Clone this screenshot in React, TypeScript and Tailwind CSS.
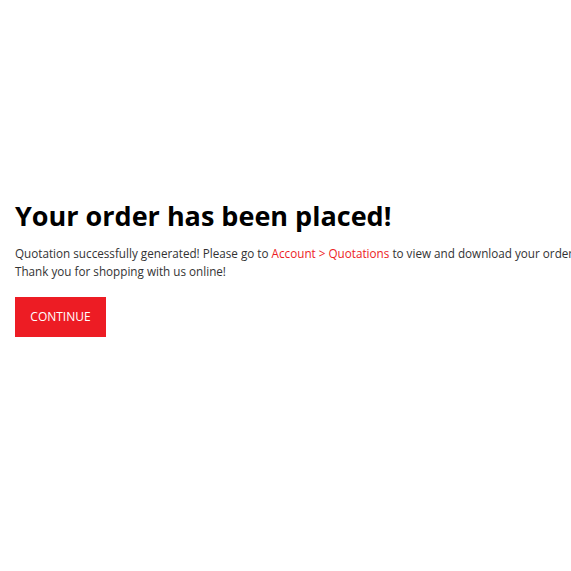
export default function App() {
  return (
    <div className="h-[571px] w-[571px] overflow-hidden bg-white font-['Open_Sans',sans-serif]">
      <div className="px-[15px] pt-[196px]">
        <h1 className="text-[27px] font-bold leading-[40px] text-black">
          Your order has been placed!
        </h1>
        <div className="mt-[8px] text-[11.7px] leading-[18px] text-[#333]">
          <p className="whitespace-nowrap">
            Quotation successfully generated! Please go to{" "}
            <a href="#" className="text-[#ed1c24]">
              Account &gt; Quotations
            </a>{" "}
            to view and download your order.
          </p>
          <p>Thank you for shopping with us online!</p>
        </div>
        <button
          type="button"
          className="mt-[17px] h-[40px] w-[91px] bg-[#ed1c24] text-[12px] uppercase text-white"
        >
          Continue
        </button>
      </div>
    </div>
  );
}
